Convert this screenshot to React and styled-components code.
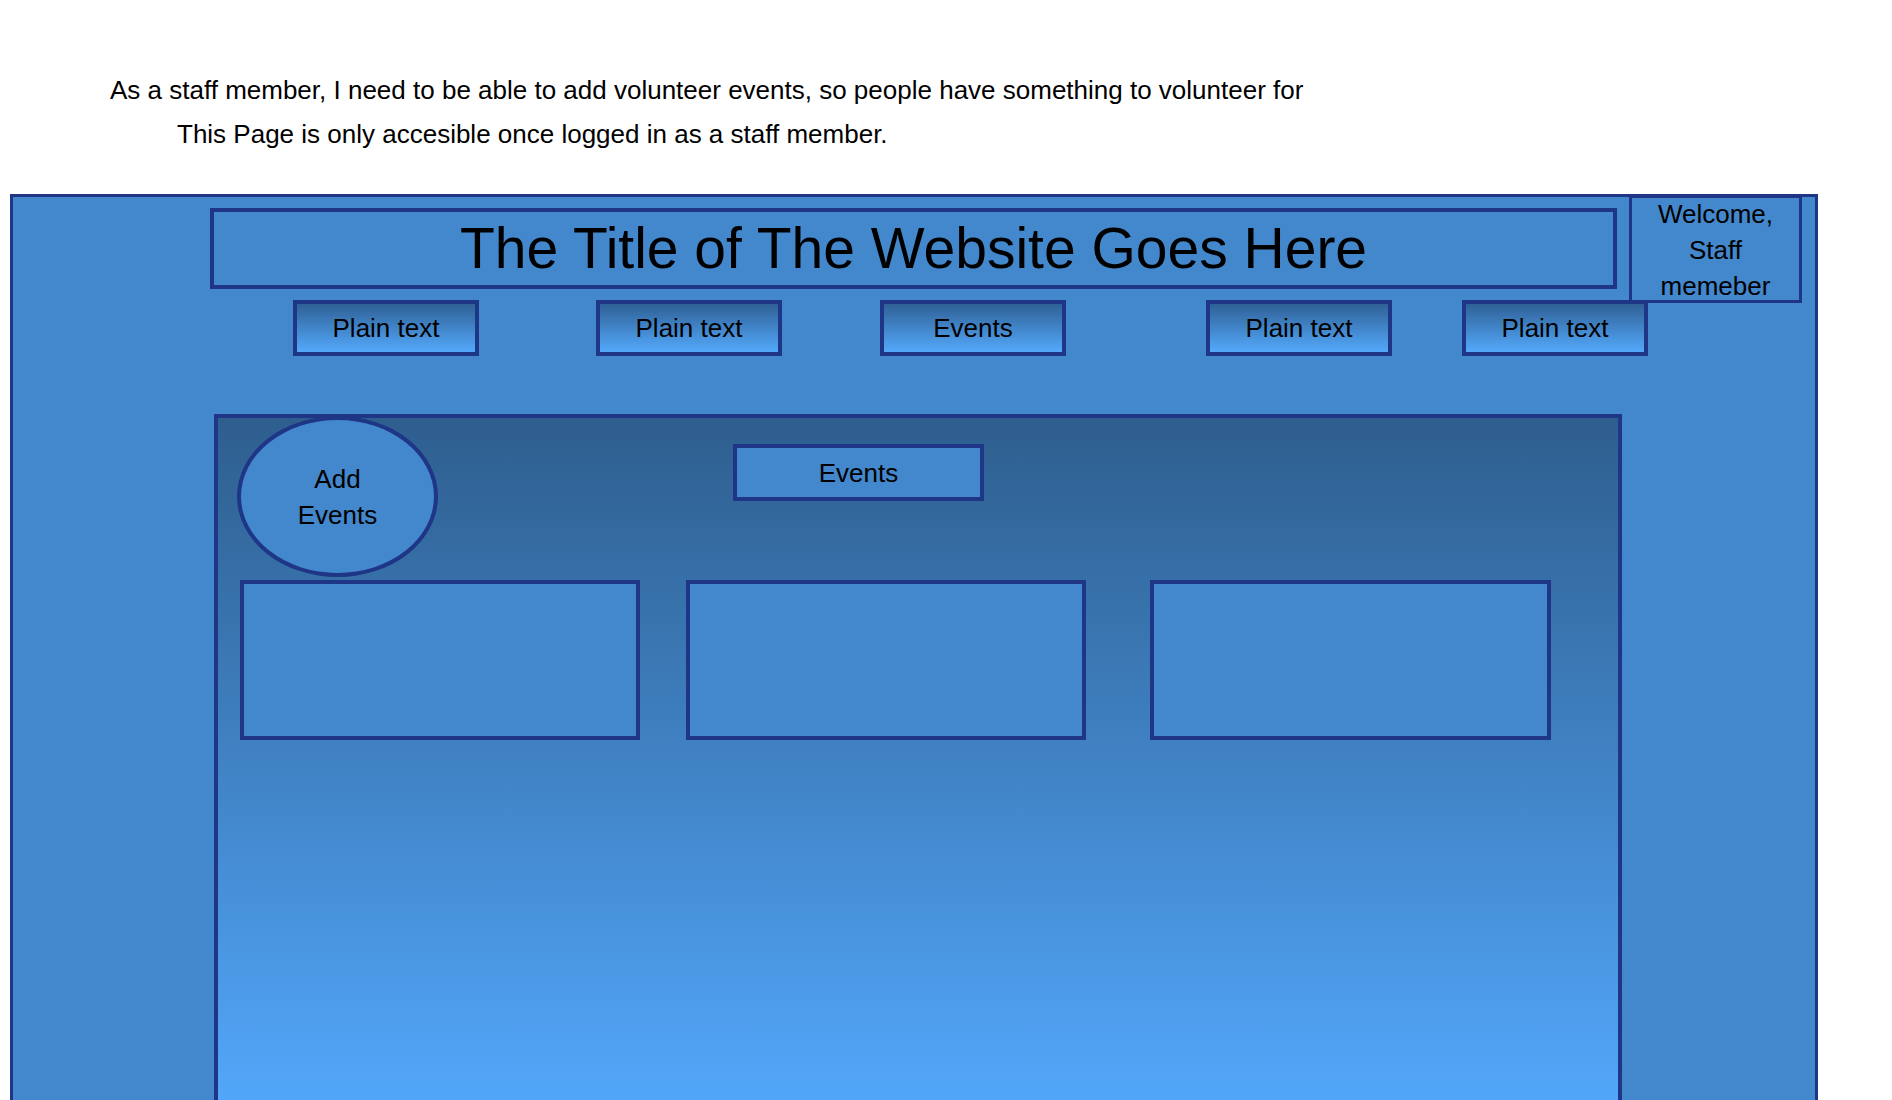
import React from 'react';
import styled, { createGlobalStyle } from 'styled-components';

const GlobalStyle = createGlobalStyle`
  html, body {
    margin: 0;
    padding: 0;
    height: 100%;
    overflow: hidden;
    background: #ffffff;
  }
  body {
    font-family: "Liberation Sans", Arial, Helvetica, sans-serif;
    color: #000000;
  }
`;

const navy = '#1f3586';
const blue = '#4387cc';

const Intro = styled.section`
  padding: 68px 0 0 110px;
  font-size: 26px;
  line-height: 44px;
`;

const Line = styled.p`
  margin: 0;
  padding-left: ${(p) => p.$indent || 0}px;
`;

const Frame = styled.main`
  position: relative;
  box-sizing: border-box;
  width: 1808px;
  margin: 38px 0 0 10px;
  padding: 11px 0 0 197px;
  background: ${blue};
  border: 3px solid ${navy};
  border-bottom: none;
`;

const TitleBar = styled.h1`
  box-sizing: border-box;
  display: flex;
  align-items: center;
  justify-content: center;
  width: 1407px;
  height: 81px;
  margin: 0;
  border: 4px solid ${navy};
  font-size: 57px;
  font-weight: 400;
  line-height: 57px;
`;

const Welcome = styled.div`
  position: absolute;
  top: -2px;
  left: 1616px;
  box-sizing: border-box;
  display: flex;
  flex-direction: column;
  justify-content: center;
  width: 173px;
  height: 108px;
  padding-top: 2px;
  border: 3px solid ${navy};
  background: ${blue};
  font-size: 26px;
  line-height: 36px;
  text-align: center;
  z-index: 1;
`;

const NavRow = styled.nav`
  display: flex;
  margin-top: 11px;
`;

const NavButton = styled.div`
  position: relative;
  z-index: 2;
  box-sizing: border-box;
  display: flex;
  align-items: center;
  justify-content: center;
  width: 186px;
  height: 56px;
  margin-left: ${(p) => p.$gap}px;
  border: 4px solid ${navy};
  background: linear-gradient(to bottom, #2f6196 0%, #53a9fb 100%);
  font-size: 26px;
  line-height: 26px;
`;

const Panel = styled.section`
  box-sizing: border-box;
  width: 1408px;
  height: 700px;
  margin: 58px 0 0 4px;
  border: 4px solid ${navy};
  border-bottom: none;
  background: linear-gradient(to bottom, #2e5e8e 0%, #53a8fc 100%);
`;

const PanelTop = styled.div`
  display: flex;
  align-items: flex-start;
  margin-top: -2px;
`;

const AddEvents = styled.div`
  box-sizing: border-box;
  display: flex;
  align-items: center;
  justify-content: center;
  width: 201px;
  height: 161px;
  margin-left: 19px;
  border: 4px solid ${navy};
  border-radius: 50%;
  background: ${blue};
  font-size: 26px;
  line-height: 36px;
  text-align: center;
`;

const SectionLabel = styled.div`
  box-sizing: border-box;
  display: flex;
  align-items: center;
  justify-content: center;
  width: 251px;
  height: 57px;
  margin: 28px 0 0 295px;
  border: 4px solid ${navy};
  background: ${blue};
  font-size: 26px;
  line-height: 26px;
`;

const CardRow = styled.div`
  display: flex;
  margin-top: 3px;
`;

const EventCard = styled.div`
  box-sizing: border-box;
  width: ${(p) => p.$width || 400}px;
  height: 160px;
  margin-left: ${(p) => p.$gap}px;
  border: 4px solid ${navy};
  background: ${blue};
`;

const navItems = [
  { label: 'Plain text', gap: 83 },
  { label: 'Plain text', gap: 117 },
  { label: 'Events', gap: 98 },
  { label: 'Plain text', gap: 140 },
  { label: 'Plain text', gap: 70 },
];

const cards = [
  { gap: 22, width: 400 },
  { gap: 46, width: 400 },
  { gap: 64, width: 401 },
];

export default function App() {
  return (
    <>
      <GlobalStyle />
      <Intro>
        <Line>As a staff member, I need to be able to add volunteer events, so people have something to volunteer for</Line>
        <Line $indent={67}>This Page is only accesible once logged in as a staff member.</Line>
      </Intro>
      <Frame>
        <TitleBar>The Title of The Website Goes Here</TitleBar>
        <Welcome>
          <span>Welcome,</span>
          <span>Staff</span>
          <span>memeber</span>
        </Welcome>
        <NavRow>
          {navItems.map((item, i) => (
            <NavButton key={i} $gap={item.gap}>{item.label}</NavButton>
          ))}
        </NavRow>
        <Panel>
          <PanelTop>
            <AddEvents>Add<br />Events</AddEvents>
            <SectionLabel>Events</SectionLabel>
          </PanelTop>
          <CardRow>
            {cards.map((c, i) => (
              <EventCard key={i} $gap={c.gap} $width={c.width} />
            ))}
          </CardRow>
        </Panel>
      </Frame>
    </>
  );
}
